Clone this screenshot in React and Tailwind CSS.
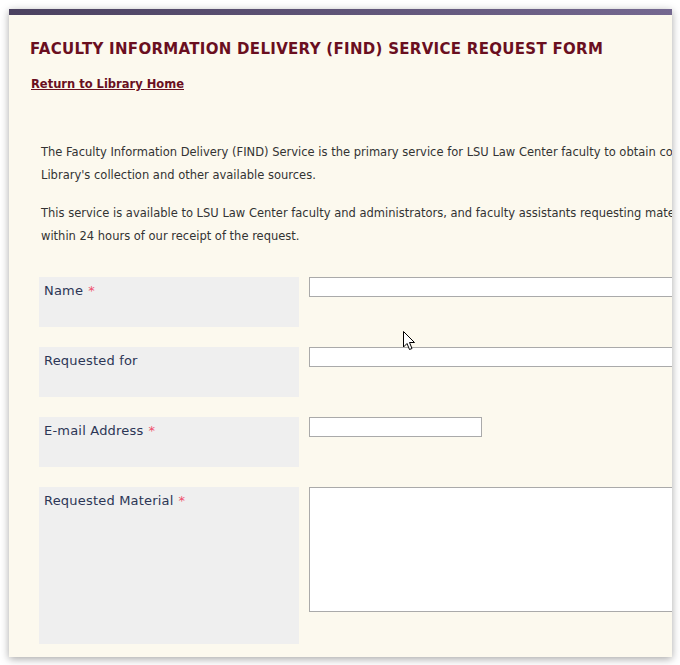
import React from "react";

const rows = [
  { label: "Name", required: true, field: "wide" },
  { label: "Requested for", required: false, field: "wide" },
  { label: "E-mail Address", required: true, field: "short" },
  { label: "Requested Material", required: true, field: "area" },
];

function Cursor() {
  return (
    <svg
      className="absolute left-[403px] top-[331px]"
      width="13"
      height="20"
      viewBox="0 0 13 20"
    >
      <path
        d="M0.5 0.5 L0.5 16 L4 12.5 L6.5 18.5 L9 17.5 L6.5 11.5 L11.5 11.5 Z"
        fill="#fff"
        stroke="#000"
        strokeWidth="1"
        strokeLinejoin="round"
      />
    </svg>
  );
}

export default function App() {
  return (
    <div className="relative w-[680px] h-[665px] bg-white overflow-hidden font-['DejaVu_Sans',Verdana,sans-serif]">
      <div className="ml-[9px] mt-[9px] w-[663px] h-[648px] bg-[#fcf9ee] overflow-hidden shadow-[0_2px_8px_rgba(0,0,0,0.35)]">
        <div className="h-[6px] bg-gradient-to-r from-[#4b4260] to-[#746890]" />
        <div className="w-[900px] pl-[21px]">
          <h1 className="mt-[24px] text-[15px] leading-[20px] font-bold text-[#6a0f1f] tracking-[0.3px]">
            FACULTY INFORMATION DELIVERY (FIND) SERVICE REQUEST FORM
          </h1>
          <a
            href="#"
            className="block mt-[17px] ml-[1px] text-[11.5px] leading-[16px] font-bold text-[#6a0f1f] underline"
          >
            Return to Library Home
          </a>

          <div className="mt-[49px] pl-[11px] text-[11.5px] leading-[23px] text-[#333]">
            <p>
              The Faculty Information Delivery (FIND) Service is the primary service for LSU Law Center faculty to obtain copies of materials from the
              <br />
              Library's collection and other available sources.
            </p>
            <p className="mt-[15px]">
              This service is available to LSU Law Center faculty and administrators, and faculty assistants requesting materials. Requests will be filled
              <br />
              within 24 hours of our receipt of the request.
            </p>
          </div>

          <div className="mt-[29px] ml-[9px] flex flex-col gap-[20px]">
            {rows.map((r) => (
              <div key={r.label} className="flex gap-[10px] items-start">
                <div
                  className={
                    r.field === "area"
                      ? "w-[260px] h-[157px] shrink-0 bg-[#efefef] px-[5px] pt-[5px] text-[13px] leading-[17px]"
                      : "w-[260px] h-[50px] shrink-0 bg-[#efefef] px-[5px] pt-[5px] text-[13px] leading-[17px]"
                  }
                >
                  <span className="text-[#2c3656] tracking-[0.2px]">{r.label}</span>
                  {r.required && <span className="ml-[5px] text-[#f0506e]">*</span>}
                </div>
                {r.field === "wide" && (
                  <div className="w-[500px] h-[20px] bg-white border border-[#aaa]" />
                )}
                {r.field === "short" && (
                  <div className="w-[173px] h-[20px] bg-white border border-[#aaa]" />
                )}
                {r.field === "area" && (
                  <div className="w-[500px] h-[125px] bg-white border border-[#aaa]" />
                )}
              </div>
            ))}
          </div>
        </div>
      </div>
      <Cursor />
    </div>
  );
}
